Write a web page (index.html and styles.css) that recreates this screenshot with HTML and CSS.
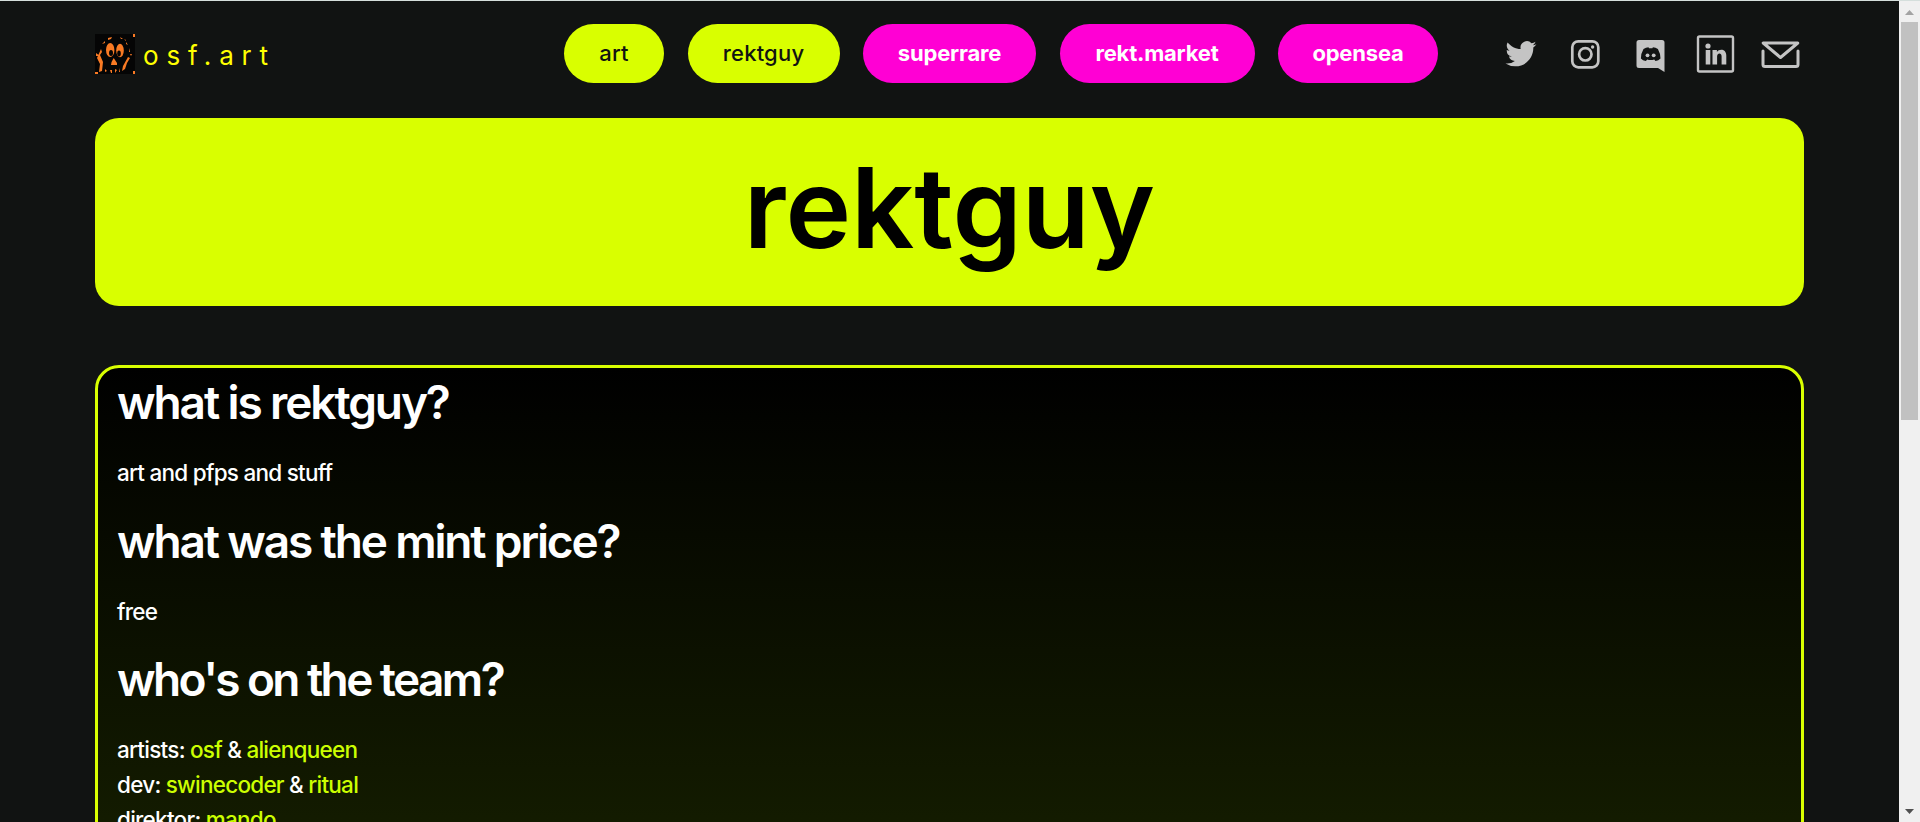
FILE: index.html
```html
<!DOCTYPE html>
<html lang="en">
<head>
<meta charset="utf-8">
<title>osf.art - rektguy</title>
<link rel="stylesheet" href="styles.css">
</head>
<body>
<div class="window">
  <div class="page">
    <header class="header">
      <a class="brand">
        <svg class="logo" viewBox="0 0 40 40">
          <rect width="40" height="40" fill="#050505"/>
          <g fill="#f97a24">
            <ellipse cx="15.200" cy="16" rx="4.200" ry="7"/>
            <ellipse cx="25" cy="16.500" rx="3.800" ry="6.700"/>
            <path d="M18.700 24l3.300 5v2h-6q0-3 2.700-7zM6 15l1 3-2 3 3 7-1 9-3 1 1-8-3-6zM1 19l4 3H1zM33 23l2 1-3 5-2 6-3 2 1-5zM0 38h3v2H0zM38 0h2v3h-2zM38 37h2v3h-2z"/>
            <path d="M10 35l2 2-2 1zM15 36h2v3h-1zM20 35l2 1-2 3zM24 34l1 4h-1zM7 10l3-3v2zM13 4l4-1-1 2-3 1zM25 3l3 2h-2zM31 8l2 3-2-1zM34 14l1 4h-1zM35 20h2l-1 2zM29 5l2 1v1z"/>
          </g>
          <g fill="#050505"><ellipse cx="16" cy="19" rx="2" ry="3"/><ellipse cx="24" cy="19.500" rx="1.800" ry="3"/></g>
        </svg>
        <span class="brand-name">osf.art</span>
      </a>
      <nav class="nav">
        <a class="pill pill-art">art</a>
        <a class="pill pill-rektguy">rektguy</a>
        <a class="pill pill-pink pill-superrare">superrare</a>
        <a class="pill pill-pink pill-market">rekt.market</a>
        <a class="pill pill-pink pill-opensea">opensea</a>
      </nav>
      <div class="social">
        <svg viewBox="0 0 40 40"><path fill="#c4c4c4" transform="translate(5.500 4.300) scale(1.290)" d="M23.950 4.570a10 10 0 01-2.820.770 4.960 4.960 0 002.160-2.720c-.950.550-2 .960-3.130 1.180a4.920 4.920 0 00-8.380 4.480C7.690 8.090 4.070 6.130 1.640 3.160a4.820 4.820 0 00-.670 2.480c0 1.710.870 3.210 2.190 4.100a4.900 4.900 0 01-2.230-.620v.060a4.920 4.920 0 003.950 4.830 5 5 0 01-2.210.080 4.940 4.940 0 004.600 3.420A9.870 9.870 0 010 19.540a13.990 13.990 0 007.550 2.210c9.050 0 14-7.500 14-13.980 0-.210 0-.420-.020-.630a9.940 9.940 0 002.460-2.550z"/></svg>
        <svg viewBox="0 0 40 40" fill="none" stroke="#c4c4c4" stroke-width="2.700"><rect x="7.300" y="7.300" width="26" height="26" rx="6"/><circle cx="20.300" cy="20.300" r="6.200"/><circle cx="27.600" cy="13" r="1.700" fill="#c4c4c4" stroke="none"/></svg>
        <svg viewBox="0 0 40 40"><path fill="#c4c4c4" d="M9 6h23a2.500 2.500 0 012.500 2.500V38L28 34H9a2.500 2.500 0 01-2.500-2.500v-23A2.500 2.500 0 019 6z"/><path fill="#111312" d="M13.500 15q2.500-1.700 5-1.700l.5.900h3.400l.5-.9q2.700 0 5 1.700 2.600 4.500 2.600 9.500-2 2.400-5 2.600l-1.300-1.700q-3.500 1.100-7 0L15.900 27q-3.200-.2-5-2.600 0-5 2.600-9.400z"/><circle cx="17.500" cy="21.300" r="1.900" fill="#c4c4c4"/><circle cx="23.700" cy="21.300" r="1.900" fill="#c4c4c4"/></svg>
        <svg viewBox="0 0 40 40"><rect x="3" y="2.500" width="35" height="35" rx="1.500" fill="none" stroke="#c4c4c4" stroke-width="2.400"/><g fill="#c4c4c4"><circle cx="13" cy="12" r="2.600"/><path d="M10.700 16h4.600v14.500h-4.600zM17.500 16h4.400v2c2-3.400 9.400-3.600 9.400 3.500v9h-4.700v-8c0-4-4.500-3.700-4.500 0v8h-4.600z"/></g></svg>
        <svg viewBox="0 0 40 40" fill="none" stroke="#c4c4c4" stroke-width="3" stroke-linecap="round" stroke-linejoin="round"><path d="M3 17v13.500a2 2 0 002 2h31a2 2 0 002-2V17"/><path d="M3.200 9h34.600L20.500 23.500z"/></svg>
      </div>
    </header>
    <section class="hero"><h1 class="title">rektguy</h1></section>
    <section class="card">
      <h2 class="q q1">what is rektguy?</h2>
      <p>art and pfps and stuff</p>
      <h2 class="q q2">what was the mint price?</h2>
      <p>free</p>
      <h2 class="q q3">who's on the team?</h2>
      <p>artists: <a>osf</a> &amp; <a>alienqueen</a><br>dev: <a>swinecoder</a> &amp; <a>ritual</a><br>direktor: <a>mando</a></p>
    </section>
  </div>
  <div class="scrollbar">
    <svg class="arrow" viewBox="0 0 9 5"><path fill="#a3a3a3" d="M4.500 0L9 5H0z"/></svg>
    <div class="thumb"></div>
    <svg class="arrow arrow-down" viewBox="0 0 9 5"><path fill="#505050" d="M0 0h9L4.500 5z"/></svg>
  </div>
</div>
</body>
</html>
```
FILE: styles.css
```css
* { box-sizing: border-box; }
body { margin: 0; background: #111312; font-family: Inter, "Open Sans", sans-serif; color: #fff; overflow: hidden; }
.window { display: grid; grid-template-columns: 1fr 21px; height: 822px; overflow: hidden; border-top: 1px solid #d5dfdc; }
.page { padding: 0 95px; height: 821px; overflow: hidden; }
.header { display: flex; align-items: center; height: 105px; margin-bottom: 12px; }
.brand { display: flex; align-items: center; gap: 8px; width: 469px; }
.logo { width: 40px; height: 40px; }
.brand-name { font-size: 26px; letter-spacing: 7.800px; color: #ff0; padding-top: 3px; }
.nav { display: flex; gap: 23.500px; }
.pill { display: flex; align-items: center; justify-content: center; height: 59px; border-radius: 30px; background: #d9ff00; color: #111312; font-size: 22px; font-weight: 500; letter-spacing: .2px; padding-bottom: 1px; }
.pill-pink { background: #ff00d4; color: #fff; font-weight: 700; letter-spacing: -.2px; }
.pill-art { width: 100px; }
.pill-rektguy { width: 152px; }
.pill-superrare { width: 173px; }
.pill-market { width: 195px; }
.pill-opensea { width: 160px; }
.social { display: flex; gap: 25px; margin-left: auto; margin-right: 4px; }
.social svg { width: 40px; height: 40px; }
.hero { height: 188px; border-radius: 24px; background: #d9ff00; display: flex; align-items: center; justify-content: center; padding-bottom: 8px; }
.title { margin: 0; font-size: 111px; line-height: 138px; font-weight: 600; color: #000; }
.card { margin-top: 59px; height: 900px; border: 3px solid #d9ff00; border-radius: 24px; padding: 5px 19px; background: linear-gradient(#000, #131b00 450px, #202e00); }
.q { margin: 0; font-size: 46px; line-height: 58px; font-weight: 600; }
.q1 { letter-spacing: -2.100px; }
.q2 { letter-spacing: -2.150px; }
.q3 { letter-spacing: -2.600px; }
.card p { margin: 24px 0 21.700px; font-size: 22.500px; line-height: 35px; font-weight: 500; letter-spacing: -.750px; }
.card a { color: #ccff00; }
.scrollbar { background: #f0f0f0; display: flex; flex-direction: column; align-items: center; padding: 9px 0 8px; }
.arrow { width: 9px; height: 5px; }
.thumb { width: 17px; height: 398px; margin-top: 7px; background: #c1c1c1; }
.arrow-down { margin-top: auto; }
```
